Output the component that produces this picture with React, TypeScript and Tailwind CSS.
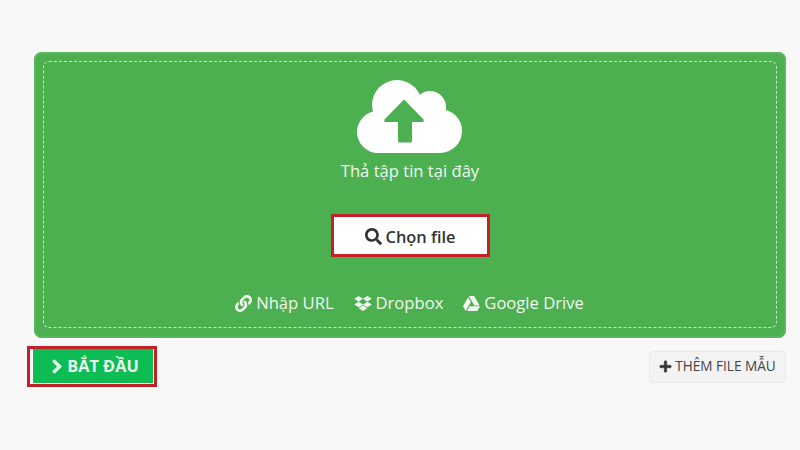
import { FaChevronRight, FaDropbox, FaGoogleDrive, FaLink, FaPlus, FaSearch } from "react-icons/fa";

function CloudIcon() {
  return (
    <svg width="105" height="73" viewBox="0 0 105 73" className="-ml-[2px] text-white">
      <g fill="currentColor">
        <circle cx="40" cy="25" r="25" />
        <circle cx="73" cy="27" r="16" />
        <circle cx="21" cy="52" r="21" />
        <circle cx="83" cy="51" r="22" />
        <path d="M21 31h62v42H21z" />
      </g>
      <path
        d="M47 19.500 66.500 39.500q1 2-1 2.500H55V61q0 1.500-1.500 1.500h-11Q41 62.500 41 61V42H28.500q-2-.5-1-2.500z"
        fill="#4caf50"
      />
    </svg>
  );
}

function SourceLink({ icon, label }: { icon: React.ReactNode; label: string }) {
  return (
    <span className="flex items-center gap-[4px] text-[16.6px] leading-[24px] text-[#f1f8f1]">
      {icon}
      {label}
    </span>
  );
}

export default function App() {
  return (
    <div className="h-[450px] w-[800px] overflow-hidden bg-[#f8f8f8] pl-[34px] pr-[14px] pt-[52px] font-['Open_Sans',sans-serif]">
      <div className="h-[286px] rounded-[8px] bg-[#4caf50] p-[9px] shadow-[inset_0_0_0_2px_#5cb660]">
        <div className="flex h-[267px] flex-col items-center rounded-[6px] border border-dashed border-[#c8e6c9] pt-[18px]">
          <CloudIcon />
          <p className="mt-[6px] text-[16.6px] leading-[24px] text-[#f1f8f1]">Thả tập tin tại đây</p>
          <div className="mt-[31px] border-[3px] border-[#c4202a]">
            <button className="flex h-[37px] w-[153px] items-center justify-center gap-[4px] bg-white pt-[3px] text-[16.4px] font-semibold text-[#333]">
              <FaSearch className="-mt-[2px] h-[17px] w-[17px]" />
              Chọn file
            </button>
          </div>
          <div className="-ml-[1px] mt-[34px] flex items-center gap-[20px]">
            <SourceLink icon={<FaLink className="h-[17px] w-[17px]" />} label="Nhập URL" />
            <SourceLink icon={<FaDropbox className="h-[17px] w-[18px]" />} label="Dropbox" />
            <SourceLink icon={<FaGoogleDrive className="h-[17px] w-[17px]" />} label="Google Drive" />
          </div>
        </div>
      </div>
      <div className="-ml-[7px] mt-[8px] flex items-center justify-between">
        <div className="border-[3px] border-[#c4202a] pb-[1px] pl-[3px] pr-[1px]">
          <button className="flex h-[34px] w-[120px] items-center justify-center gap-[5px] bg-[#0dbd54] pl-[5px] text-[16.3px] font-bold text-[#e8f8ee]">
            <FaChevronRight className="h-[15px] w-[10px] stroke-[#e8f8ee] stroke-[40]" />
            BẮT ĐẦU
          </button>
        </div>
        <button className="flex h-[32px] w-[137px] items-center justify-center gap-[3px] rounded-[4px] border border-[#eaeaea] bg-[#f3f3f3] text-[13.6px] text-[#444]">
          <FaPlus className="h-[13px] w-[13px] stroke-[#333] stroke-[20] text-[#333]" />
          THÊM FILE MẪU
        </button>
      </div>
    </div>
  );
}
